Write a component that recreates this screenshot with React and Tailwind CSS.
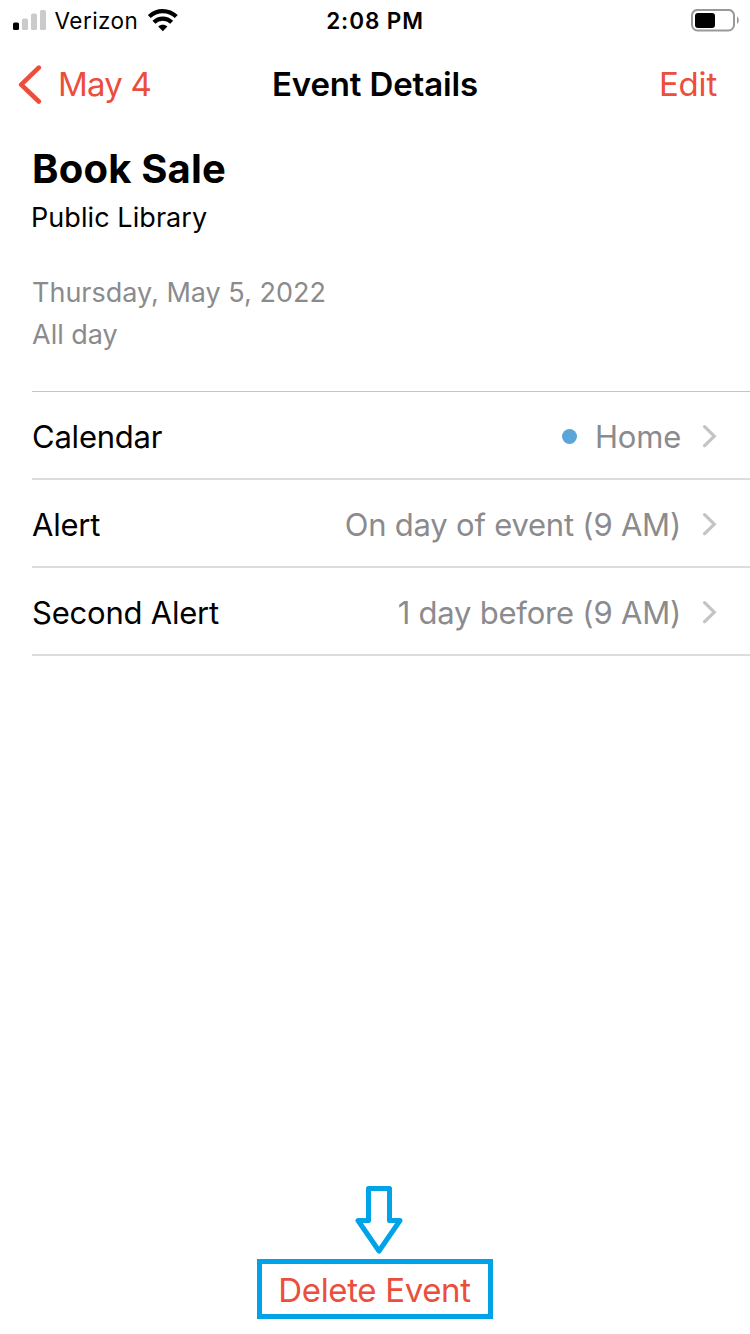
function Signal() {
  return (
    <svg className="h-[22px] w-[34px]" viewBox="0 0 34 22" fill="#cbcbcb">
      <rect x="0" y="12.5" width="6" height="7.5" rx="1.5" fill="#000" />
      <rect x="9" y="8.5" width="6" height="11.5" rx="1.5" />
      <rect x="18" y="3.5" width="6" height="16.5" rx="1.5" />
      <rect x="27" y="0" width="6" height="20" rx="1.5" />
    </svg>
  );
}

function Wifi() {
  return (
    <svg className="h-[24px] w-[30px]" viewBox="0 -1 30 24" fill="none" stroke="#000">
      <path d="M1.3 6.6C9 -0.7 20.6 -0.7 28.3 6.6" strokeWidth="4.2" />
      <path d="M5.9 12.3C11 7.4 18.6 7.4 23.7 12.3" strokeWidth="4.2" />
      <path d="M14.8 21.2L10.2 16.6C12.8 14 16.8 14 19.4 16.6Z" fill="#000" stroke="none" />
    </svg>
  );
}

function Battery() {
  return (
    <svg className="h-[24px] w-[48px]" viewBox="0 0 48 24">
      <rect x="1" y="0.9" width="42" height="20.6" rx="5.5" fill="none" stroke="#999" strokeWidth="2" />
      <rect x="4" y="4" width="20" height="15" rx="3" fill="#000" />
      <path d="M46 7.5C48.4 9 48.4 13.5 46 15Z" fill="#999" />
    </svg>
  );
}

function Chevron() {
  return (
    <svg className="ml-[21px] h-[24px] w-[15px]" viewBox="0 0 15 24" fill="none" stroke="#c4c4c6" strokeWidth="3.2" strokeLinecap="round" strokeLinejoin="miter">
      <path d="M2.6 1.7L12.3 11.2L2.6 20.7" />
    </svg>
  );
}

function Row({ label, value, dot }) {
  return (
    <div className="flex h-[88px] items-center border-b-2 border-[#dcdcdd] pt-[3px] pr-[33px] text-[31px] tracking-[-0.22px]">
      <span className="pt-[2px] text-black">{label}</span>
      <span className="flex-1" />
      {dot && <span className="mr-[18px] h-[15px] w-[15px] rounded-full bg-[#5aa6d8]" />}
      <span className="pt-[2px]">{value}</span>
      <Chevron />
    </div>
  );
}

export default function App() {
  return (
    <div className="flex h-[1334px] w-[750px] flex-col overflow-hidden bg-white font-['Inter',sans-serif] whitespace-nowrap text-black">
      <div className="grid h-[42px] grid-cols-3 items-center text-[22.5px]">
        <div className="flex items-center pl-[13px]">
          <Signal />
          <span className="ml-[7.5px] w-[93.5px] tracking-[0.45px]">Verizon</span>
          <Wifi />
        </div>
        <div className="text-center font-semibold tracking-[0.9px]">2:08 PM</div>
        <div className="flex justify-end pr-[11px]">
          <Battery />
        </div>
      </div>

      <div className="grid h-[84px] grid-cols-3 items-center pt-px text-[33px]">
        <div className="flex items-center pl-[17px] text-[#eb4e3d]">
          <svg className="h-[40px] w-[26px]" viewBox="0 0 26 40" fill="none" stroke="#eb4e3d" strokeWidth="4.6" strokeLinecap="round" strokeLinejoin="round">
            <path d="M21.8 2.7L4.2 19.6L21.8 36.5" />
          </svg>
          <span className="ml-[15px] tracking-[-0.8px]">May 4</span>
        </div>
        <div className="text-center font-semibold tracking-[-0.15px]">Event Details</div>
        <div className="pr-[33px] text-right tracking-[-0.2px] text-[#eb4e3d]">Edit</div>
      </div>

      <div className="flex h-[265px] flex-col pl-[32px]">
        <h1 className="mt-[18px] h-[50px] text-[40px] leading-[50px] font-bold tracking-[0.2px]">Book Sale</h1>
        <p className="mt-[4px] -ml-px h-[40px] text-[27px] leading-[40px] tracking-[0.07px]">Public Library</p>
        <p className="mt-[34px] h-[42px] text-[27px] leading-[42px] text-[#8b8b8e]">Thursday, May 5, 2022</p>
        <p className="h-[42px] text-[27px] leading-[42px] text-[#8b8b8e]">All day</p>
      </div>

      <div className="ml-[32px] border-t border-[#c4c4c6] text-[#8b8b8e]">
        <Row label="Calendar" value="Home" dot />
        <Row label="Alert" value="On day of event (9 AM)" />
        <Row label="Second Alert" value="1 day before (9 AM)" />
      </div>

      <div className="mt-auto flex flex-col items-center pb-[15px]">
        <svg className="mb-[4px] ml-[8px] h-[69px] w-[50px]" viewBox="0 0 50 69" fill="none" stroke="#00a2e8" strokeWidth="5" strokeLinejoin="round">
          <path d="M14.5 2.5H35.5V34.5H46L25 65L4 34.5H14.5Z" />
        </svg>
        <button className="flex h-[60px] w-[236px] items-center justify-center border-[5px] border-[#00a2e8] pt-[3px] pr-px text-[33px] tracking-[-0.35px] text-[#eb4e3d]">
          Delete Event
        </button>
      </div>
    </div>
  );
}
